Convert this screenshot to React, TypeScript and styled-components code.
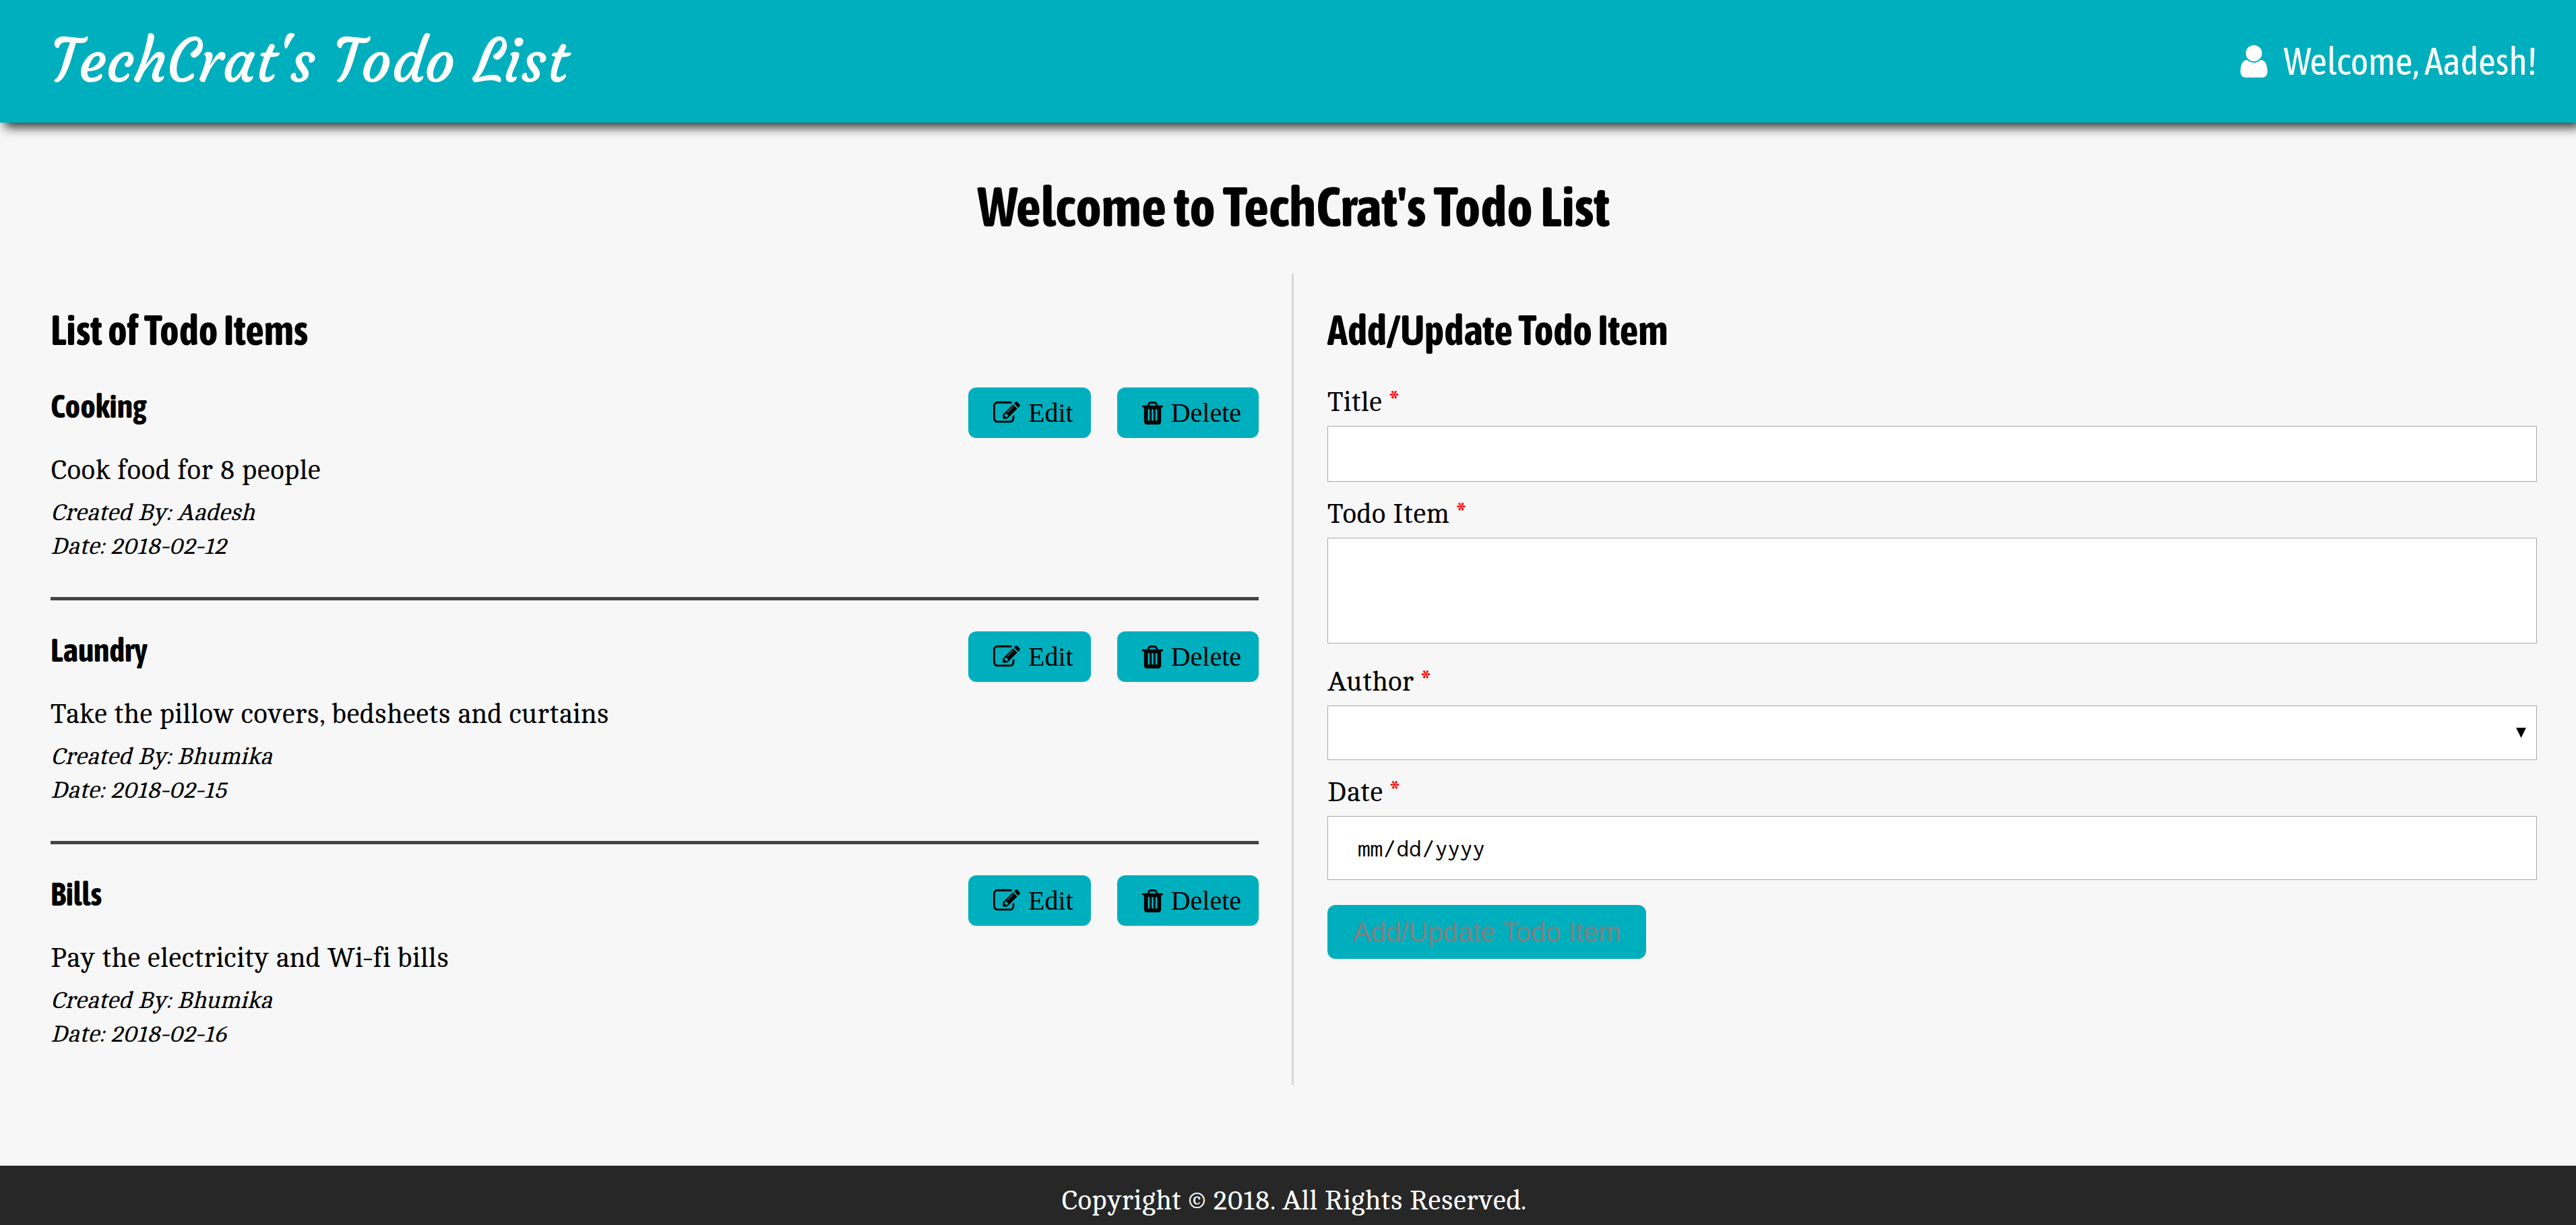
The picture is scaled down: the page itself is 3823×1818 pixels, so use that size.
import React, { useState } from "react";
import styled, { createGlobalStyle } from "styled-components";

const teal = "#00afbd";
const heading = '"Asap Condensed", "Open Sans Condensed", "Open Sans", sans-serif';
const body = 'Cambo, "Noto Serif", "DejaVu Serif", serif';
const script = 'Courgette, "Liberation Serif", cursive';

const GlobalStyle = createGlobalStyle`
  *, *::before, *::after { box-sizing: border-box; }
  body {
    margin: 0;
    background: #f7f7f7;
    color: #000;
    font-family: ${body};
    font-size: 40px;
    line-height: 50px;
  }
  h1, h2, h3, p { margin: 0; }
`;

const Header = styled.header`
  display: flex;
  align-items: center;
  justify-content: space-between;
  height: 182px;
  padding: 0 58px 0 75px;
  background: ${teal};
  color: #fff;
  box-shadow: 7px 7px 15px #333;
`;

const Brand = styled.div`
  font-family: ${script};
  font-size: 88px;
  line-height: 120px;
`;

const Greeting = styled.div`
  display: flex;
  align-items: center;
  gap: 24px;
  font-family: ${heading};
  font-size: 56px;
  line-height: 64px;
`;

const Main = styled.main`
  padding: 0 58px 120px 75px;
`;

const PageTitle = styled.h1`
  padding: 74px 0 50px;
  text-align: center;
  font-family: ${heading};
  font-size: 82px;
  line-height: 100px;
`;

const Columns = styled.div`
  display: grid;
  grid-template-columns: 1fr 1fr;
`;

const ListPanel = styled.section`
  padding-right: 49px;
  border-right: 3px solid #d8d8d8;
`;

const FormPanel = styled.section`
  padding-left: 50px;
`;

const PanelTitle = styled.h2`
  padding: 44px 0 45px;
  font-family: ${heading};
  font-size: 61px;
  line-height: 80px;
`;

const Item = styled.article`
  padding-bottom: 50px;

  & + & {
    padding-top: 46px;
    border-top: 5px solid #444;
  }
`;

const ItemHead = styled.div`
  display: flex;
  align-items: flex-start;
  justify-content: space-between;
  margin-bottom: 24px;
`;

const ItemTitle = styled.h3`
  font-family: ${heading};
  font-size: 48px;
  line-height: 56px;
`;

const Actions = styled.div`
  display: flex;
  gap: 39px;
`;

const ActionButton = styled.button`
  display: flex;
  align-items: center;
  gap: 12px;
  height: 75px;
  padding: 0 26px 0 37px;
  border: 0;
  border-radius: 12px;
  background: ${teal};
  color: #000;
  font-family: "Liberation Serif", serif;
  font-size: 40px;
  cursor: pointer;
`;

const Meta = styled.div`
  margin-top: 12px;
  font-size: 35px;
  font-style: italic;
`;

const Form = styled.form`
  display: flex;
  flex-direction: column;
  align-items: flex-start;
`;

const Field = styled.div<{ $after?: number }>`
  display: flex;
  flex-direction: column;
  gap: 11px;
  width: 100%;
  margin-bottom: ${(p) => p.$after ?? 26}px;
`;

const Label = styled.label`
  line-height: 46px;
`;

const Required = styled.span`
  color: #f00;
`;

const control = `
  display: block;
  width: 100%;
  margin: 0;
  padding: 0 43px;
  border: 1px solid #a9a9a9;
  border-radius: 0;
  background: #fff;
  color: #000;
  font-family: ${body};
  font-size: 37px;
`;

const TextInput = styled.input`
  ${control}
  height: 83px;
`;

const TextArea = styled.textarea`
  ${control}
  height: 157px;
  resize: none;
`;

const SelectBox = styled.div`
  position: relative;
`;

const Select = styled.select`
  ${control}
  height: 81px;
  appearance: none;
`;

const Arrow = styled.svg`
  position: absolute;
  top: 33px;
  right: 16px;
  width: 15px;
  height: 15px;
  pointer-events: none;
`;

const DateInput = styled.input`
  ${control}
  height: 95px;
  font-family: Inconsolata, "Liberation Mono", monospace;

  &::-webkit-calendar-picker-indicator {
    display: none;
  }
`;

const SubmitButton = styled.button`
  height: 80px;
  padding: 0 38px;
  border: 0;
  border-radius: 12px;
  background: ${teal};
  color: #808080;
  font-family: "Liberation Sans", sans-serif;
  font-size: 40px;
`;

const Footer = styled.footer`
  padding: 28px 58px 10px 75px;
  background: #272727;
  color: #fff;
  text-align: center;
`;

/* Glyph outlines use a y-up grid, so each one is flipped onto the SVG axis. */
const Glyph = ({ units, size, d }: { units: number; size: number; d: string }) => (
  <svg width={Math.round((units / 1792) * size)} height={size} viewBox={`0 0 ${units} 1792`} fill="currentColor" aria-hidden="true">
    <path transform="translate(0 1536) scale(1 -1)" d={d} />
  </svg>
);

const USER =
  "M1280 137q0 -109 -62.5 -187t-150.5 -78h-854q-88 0 -150.5 78t-62.5 187q0 85 8.5 160.5t31.5 152t58.5 131t94 89t134.5 34.5q131 -128 313 -128t313 128q76 0 134.5 -34.5t94 -89t58.5 -131t31.5 -152t8.5 -160.5zM1024 1024q0 -159 -112.5 -271.5t-271.5 -112.5t-271.5 112.5t-112.5 271.5t112.5 271.5t271.5 112.5t271.5 -112.5t112.5 -271.5z";
const EDIT =
  "M888 352l116 116l-152 152l-116 -116v-56h96v-96h56zM1328 1072q-16 16 -33 -1l-350 -350q-17 -17 -1 -33t33 1l350 350q17 17 1 33zM1408 478v-190q0 -119 -84.5 -203.5t-203.5 -84.5h-832q-119 0 -203.5 84.5t-84.5 203.5v832q0 119 84.5 203.5t203.5 84.5h832q63 0 117 -25q15 -7 18 -23q3 -17 -9 -29l-49 -49q-14 -14 -32 -8q-23 6 -45 6h-832q-66 0 -113 -47t-47 -113v-832q0 -66 47 -113t113 -47h832q66 0 113 47t47 113v126q0 13 9 22l64 64q15 15 35 7t20 -29zM1312 1216l288 -288l-672 -672h-288v288zM1756 1084l-92 -92l-288 288l92 92q28 28 68 28t68 -28l152 -152q28 -28 28 -68t-28 -68z";
const TRASH =
  "M512 160v704q0 14 -9 23t-23 9h-64q-14 0 -23 -9t-9 -23v-704q0 -14 9 -23t23 -9h64q14 0 23 9t9 23zM768 160v704q0 14 -9 23t-23 9h-64q-14 0 -23 -9t-9 -23v-704q0 -14 9 -23t23 -9h64q14 0 23 9t9 23zM1024 160v704q0 14 -9 23t-23 9h-64q-14 0 -23 -9t-9 -23v-704q0 -14 9 -23t23 -9h64q14 0 23 9t9 23zM480 1152h448l-48 117q-7 9 -17 11h-317q-10 -2 -17 -11zM1408 1120v-64q0 -14 -9 -23t-23 -9h-96v-948q0 -83 -47 -143.5t-113 -60.5h-832q-66 0 -113 58.5t-47 141.5v952h-96q-14 0 -23 9t-9 23v64q0 14 9 23t23 9h309l70 167q15 37 54 63t79 26h320q40 0 79 -26t54 -63l70 -167h309q14 0 23 -9t9 -23z";

const items = [
  { title: "Cooking", text: "Cook food for 8 people", author: "Aadesh", date: "2018-02-12" },
  { title: "Laundry", text: "Take the pillow covers, bedsheets and curtains", author: "Bhumika", date: "2018-02-15" },
  { title: "Bills", text: "Pay the electricity and Wi-fi bills", author: "Bhumika", date: "2018-02-16" },
];

const FieldLabel = ({ id, children }: { id: string; children: string }) => (
  <Label htmlFor={id}>
    {children} <Required>*</Required>
  </Label>
);

export default function App() {
  const [author, setAuthor] = useState("");

  return (
    <>
      <GlobalStyle />
      <Header>
        <Brand>TechCrat's Todo List</Brand>
        <Greeting>
          <Glyph units={1280} size={56} d={USER} />
          <span>Welcome, Aadesh!</span>
        </Greeting>
      </Header>

      <Main>
        <PageTitle>Welcome to TechCrat's Todo List</PageTitle>
        <Columns>
          <ListPanel>
            <PanelTitle>List of Todo Items</PanelTitle>
            {items.map((item) => (
              <Item key={item.title}>
                <ItemHead>
                  <ItemTitle>{item.title}</ItemTitle>
                  <Actions>
                    <ActionButton type="button">
                      <Glyph units={1792} size={40} d={EDIT} />
                      Edit
                    </ActionButton>
                    <ActionButton type="button">
                      <Glyph units={1408} size={40} d={TRASH} />
                      Delete
                    </ActionButton>
                  </Actions>
                </ItemHead>
                <p>{item.text}</p>
                <Meta>
                  <div>Created By: {item.author}</div>
                  <div>Date: {item.date}</div>
                </Meta>
              </Item>
            ))}
          </ListPanel>

          <FormPanel>
            <PanelTitle>Add/Update Todo Item</PanelTitle>
            <Form>
              <Field>
                <FieldLabel id="title">Title</FieldLabel>
                <TextInput id="title" type="text" />
              </Field>
              <Field $after={35}>
                <FieldLabel id="todo">Todo Item</FieldLabel>
                <TextArea id="todo" />
              </Field>
              <Field>
                <FieldLabel id="author">Author</FieldLabel>
                <SelectBox>
                  <Select id="author" value={author} onChange={(e) => setAuthor(e.target.value)}>
                    <option value="" />
                    <option>Aadesh</option>
                    <option>Bhumika</option>
                  </Select>
                  <Arrow viewBox="0 0 15 15" aria-hidden="true">
                    <path d="M0 0h15l-7.500 15z" />
                  </Arrow>
                </SelectBox>
              </Field>
              <Field $after={37}>
                <FieldLabel id="date">Date</FieldLabel>
                <DateInput id="date" type="date" />
              </Field>
              <SubmitButton type="submit" disabled>
                Add/Update Todo Item
              </SubmitButton>
            </Form>
          </FormPanel>
        </Columns>
      </Main>

      <Footer>Copyright © 2018. All Rights Reserved.</Footer>
    </>
  );
}
